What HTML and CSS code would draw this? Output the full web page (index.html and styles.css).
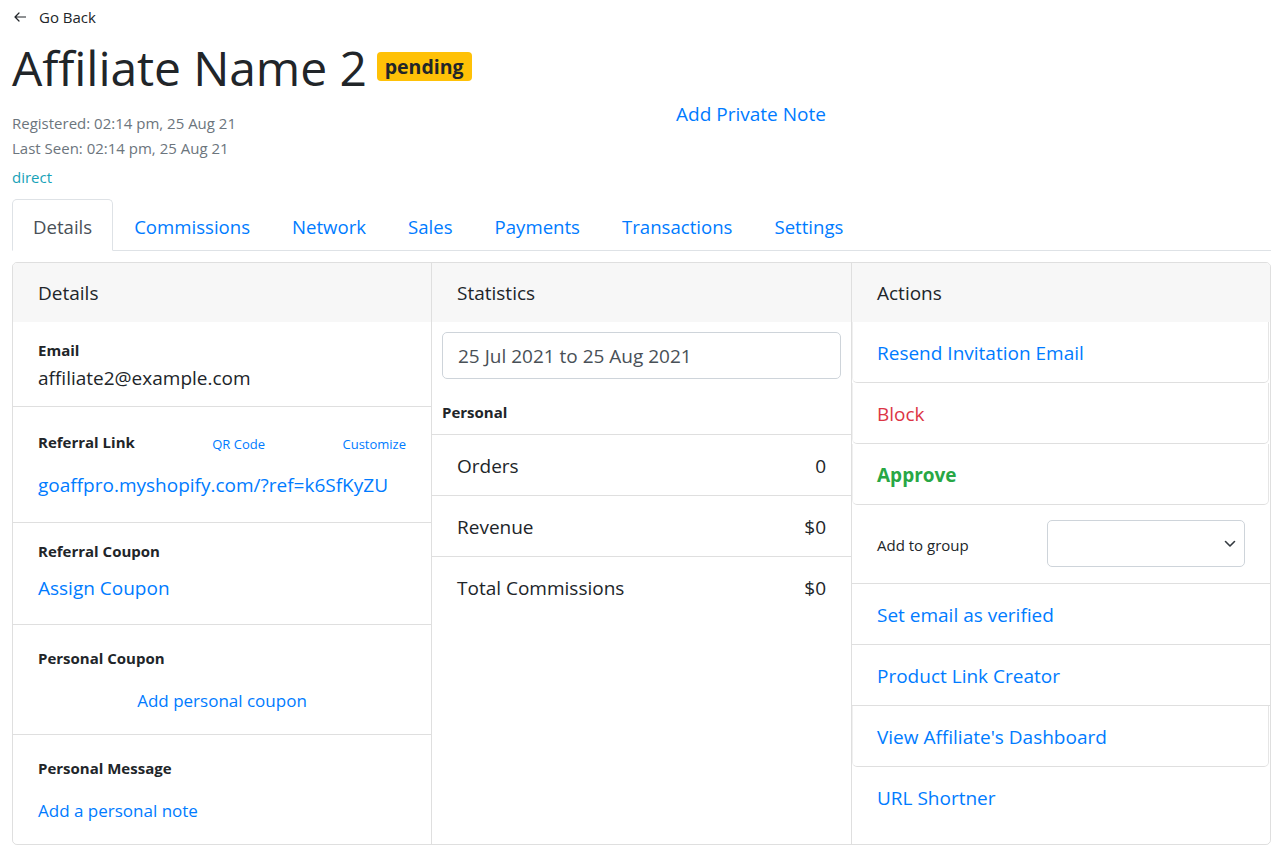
FILE: index.html
```html
<!DOCTYPE html>
<html lang="en">
<head>
<meta charset="utf-8">
<title>Affiliate Name 2</title>
<link rel="stylesheet" href="styles.css">
</head>
<body>
<div class="page">
  <a class="back" href="#">
    <svg class="back-icon" width="12" height="10" viewBox="0 0 12 10" aria-hidden="true">
      <path d="M11.5 5H1M5 1L1 5l4 4" fill="none" stroke="#212529" stroke-width="1.2" stroke-linecap="round" stroke-linejoin="round"/>
    </svg>
    <span>Go Back</span>
  </a>

  <div class="head">
    <div class="head-main">
      <h1 class="title">Affiliate Name 2 <span class="badge">pending</span></h1>
      <div class="meta">
        <div>Registered: 02:14 pm, 25 Aug 21</div>
        <div>Last Seen: 02:14 pm, 25 Aug 21</div>
      </div>
      <div class="source">direct</div>
    </div>
    <div class="note-col">
      <a href="#" class="note-link">Add Private Note</a>
    </div>
  </div>

  <nav class="tabs">
    <a class="tab active" href="#">Details</a>
    <a class="tab" href="#">Commissions</a>
    <a class="tab" href="#">Network</a>
    <a class="tab" href="#">Sales</a>
    <a class="tab" href="#">Payments</a>
    <a class="tab" href="#">Transactions</a>
    <a class="tab" href="#">Settings</a>
  </nav>

  <div class="cards">
    <section class="card">
      <div class="card-header">Details</div>
      <div class="sec sec-email">
        <div class="lbl">Email</div>
        <div class="val">affiliate2@example.com</div>
      </div>
      <div class="sec sec-ref">
        <div class="ref-row">
          <span class="lbl">Referral Link</span>
          <a href="#" class="small-link">QR Code</a>
          <a href="#" class="small-link">Customize</a>
        </div>
        <a href="#" class="big-link ref-link">goaffpro.myshopify.com/?ref=k6SfKyZU</a>
      </div>
      <div class="sec sec-coupon">
        <div class="lbl">Referral Coupon</div>
        <a href="#" class="big-link coupon-link">Assign Coupon</a>
      </div>
      <div class="sec sec-low">
        <div class="lbl">Personal Coupon</div>
        <div class="mid-link center"><a href="#">Add personal coupon</a></div>
      </div>
      <div class="sec sec-low">
        <div class="lbl">Personal Message</div>
        <div class="mid-link"><a href="#">Add a personal note</a></div>
      </div>
    </section>

    <section class="card">
      <div class="card-header">Statistics</div>
      <div class="date-input">25 Jul 2021 to 25 Aug 2021</div>
      <div class="personal">Personal</div>
      <div class="stat-row"><span>Orders</span><span>0</span></div>
      <div class="stat-row"><span>Revenue</span><span>$0</span></div>
      <div class="stat-row"><span>Total Commissions</span><span>$0</span></div>
    </section>

    <section class="card">
      <div class="card-header">Actions</div>
      <a href="#" class="act rounded">Resend Invitation Email</a>
      <a href="#" class="act rounded danger">Block</a>
      <a href="#" class="act rounded success">Approve</a>
      <div class="act group-row">
        <span class="group-label">Add to group</span>
        <div class="select">
          <svg width="12" height="8" viewBox="0 0 12 8" aria-hidden="true">
            <path d="M1.5 1.5L6 6l4.5-4.5" fill="none" stroke="#343a40" stroke-width="1.6" stroke-linecap="round" stroke-linejoin="round"/>
          </svg>
        </div>
      </div>
      <a href="#" class="act">Set email as verified</a>
      <a href="#" class="act">Product Link Creator</a>
      <a href="#" class="act rounded">View Affiliate's Dashboard</a>
      <a href="#" class="act last">URL Shortner</a>
    </section>
  </div>
</div>
</body>
</html>
```
FILE: styles.css
```css
* { box-sizing: border-box; }

body {
  margin: 0;
  font-family: "Open Sans", "Noto Sans", sans-serif;
  color: #212529;
  font-size: 19px;
  line-height: 1.5;
  background: #fff;
}

a { color: #007bff; text-decoration: none; }

.page { padding: 0 12px; }

/* Go back */
.back {
  display: flex;
  align-items: center;
  gap: 13px;
  height: 34px;
  padding-left: 2px;
  font-size: 15px;
  color: #212529;
}
.back-icon { display: block; }

/* Header */
.head {
  display: grid;
  grid-template-columns: 419px 640px;
  margin-top: 5px;
}
.title {
  display: flex;
  align-items: center;
  margin: 0;
  height: 58px;
  font-size: 48px;
  font-weight: 400;
  line-height: 58px;
  letter-spacing: -0.1px;
  white-space: nowrap;
}
.badge {
  margin-left: 10px;
  margin-bottom: 4px;
  padding: 0 8px;
  font-size: 19.5px;
  font-weight: 700;
  line-height: 29px;
  letter-spacing: 0;
  background: #ffc107;
  border-radius: 4px;
  color: #212529;
}
.meta {
  margin-top: 14px;
  font-size: 15px;
  line-height: 25px;
  color: #6c757d;
}
.source {
  margin-top: 4px;
  font-size: 15px;
  line-height: 25px;
  color: #17a2b8;
}
.note-col {
  padding-top: 60px;
  text-align: center;
}
.note-link { line-height: 30px; }

/* Tabs */
.tabs {
  display: flex;
  margin-top: 9px;
  border-bottom: 1px solid #dee2e6;
}
.tab {
  padding: 12px 20px 8px;
  margin-bottom: -1px;
  font-size: 18.6px;
  line-height: 30px;
  border: 1px solid transparent;
  border-radius: 5px 5px 0 0;
}
.tab.active {
  color: #495057;
  background: #fff;
  border-color: #dee2e6 #dee2e6 #fff;
}

/* Cards */
.cards {
  display: grid;
  grid-template-columns: 418px 420px 1fr;
  margin-top: 11px;
  border: 1px solid rgba(0, 0, 0, .125);
  border-radius: 5px;
  overflow: hidden;
}
.card {
  display: flex;
  flex-direction: column;
  min-width: 0;
}
.card + .card { border-left: 1px solid rgba(0, 0, 0, .125); }
.card-header {
  height: 59px;
  padding: 2px 25px 0;
  line-height: 57px;
  background: #f7f7f7;
}

/* Details column */
.sec {
  padding: 0 25px;
  border-top: 1px solid rgba(0, 0, 0, .125);
}
.lbl {
  font-size: 15px;
  font-weight: 700;
  line-height: 22px;
}
.sec-email { border-top: 0; padding-top: 17px; padding-bottom: 14px; }
.val { margin-top: 3px; font-size: 19px; line-height: 28px; }

.sec-ref { padding-top: 19px; padding-bottom: 22px; }
.ref-row {
  display: flex;
  justify-content: space-between;
  align-items: center;
  height: 32px;
}
.small-link { font-size: 13px; line-height: 20px; padding-top: 3px; }
.big-link { display: block; line-height: 30px; }
.ref-link { margin-top: 12px; }

.sec-coupon { padding-top: 17px; padding-bottom: 21px; }
.coupon-link { margin-top: 11px; }

.sec-low { padding-top: 22px; padding-bottom: 20px; }
.mid-link { margin-top: 18px; font-size: 17px; line-height: 27px; }
.center { text-align: center; }

/* Statistics column */
.date-input {
  height: 47px;
  margin: 10px 10px 0 10px;
  padding: 2px 15px 0;
  line-height: 43px;
  color: #495057;
  border: 1px solid #ced4da;
  border-radius: 5px;
}
.personal {
  margin: 22px 0 11px 10px;
  font-size: 15px;
  font-weight: 700;
  line-height: 22px;
}
.stat-row {
  display: flex;
  justify-content: space-between;
  padding: 16px 25px 14px;
  line-height: 30px;
  border-top: 1px solid rgba(0, 0, 0, .125);
}

/* Actions column */
.act {
  display: block;
  padding: 16px 25px 14px;
  line-height: 30px;
  border-bottom: 1px solid rgba(0, 0, 0, .125);
}
.act.rounded {
  margin-right: 1px;
  border-left: 1px solid rgba(0, 0, 0, .06);
  border-right: 1px solid rgba(0, 0, 0, .1);
  border-radius: 0 0 5px 5px;
  padding-left: 24px;
}
.act.last { border-bottom: 0; flex: 1; }
.danger { color: #dc3545; }
.success { color: #28a745; font-weight: 700; }
.group-row {
  display: flex;
  align-items: center;
  padding-top: 15px;
  padding-bottom: 16px;
}
.group-label {
  flex: 1;
  padding-top: 2px;
  font-size: 15px;
  line-height: 22px;
}
.select {
  display: flex;
  align-items: center;
  justify-content: flex-end;
  width: 198px;
  height: 47px;
  padding-right: 8px;
  border: 1px solid #ced4da;
  border-radius: 5px;
}
.select svg { display: block; }
```
